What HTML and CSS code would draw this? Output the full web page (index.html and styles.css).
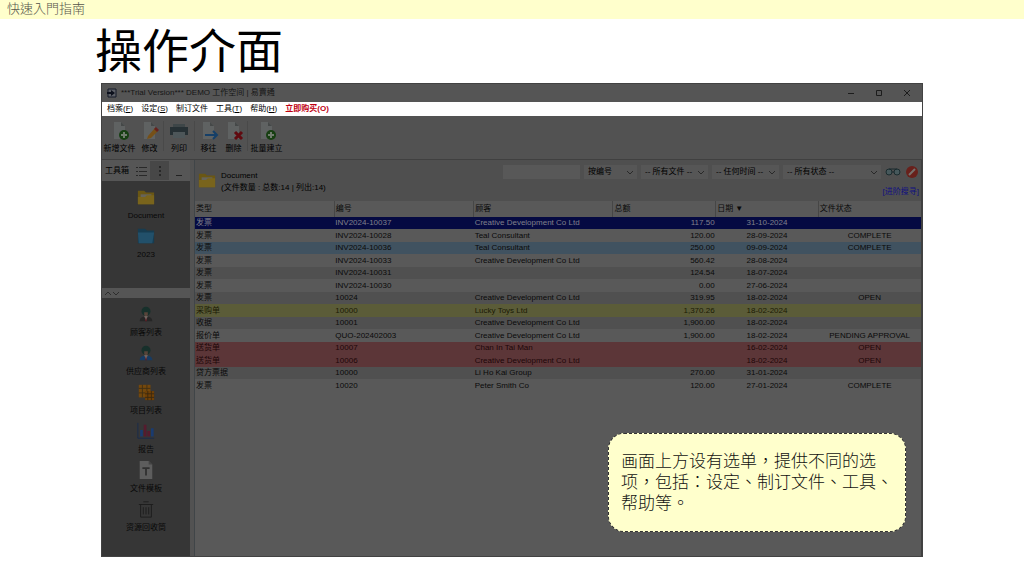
FILE: index.html
```html
<!DOCTYPE html>
<html lang="zh-Hant">
<head>
<meta charset="utf-8">
<title>操作介面</title>
<link rel="stylesheet" href="styles.css">
</head>
<body>
<svg width="0" height="0" class="defs" aria-hidden="true">
  <symbol id="page" viewBox="0 0 20 20"><path d="M4 1h7l4 4v13H4z" fill="#5f6262"/><path d="M11 1v4h4z" fill="#454848"/></symbol>
  <symbol id="folder" viewBox="0 0 20 20"><path d="M1 3h7l2 2h9v13H1z" fill="#6a5714"/><path d="M4 7h12v5H4z" fill="#66645a"/><path d="M1 10h8l2-2h8v10H1z" fill="#79641c"/></symbol>
  <symbol id="person" viewBox="0 0 20 20"><path d="M3 18c0-4 3-5 5-5h4c2 0 5 1 5 5z" fill="currentColor"/><path d="M8 12h4l-2 6z" fill="#77706a"/><path d="M10 13l1 5H9z" fill="#5d1820"/><circle cx="10" cy="7" r="5" fill="#17302b"/><path d="M8 8h4v3l-2 2-2-2z" fill="#57443a"/></symbol>
  <symbol id="chev" viewBox="0 0 8 6"><path d="M1 1l3 3 3-3" fill="none" stroke="#292929"/></symbol>
</svg>
<header class="guide">快速入門指南</header>
<main class="slide">
  <h1>操作介面</h1>
  <section class="window">
    <div class="titlebar">
      <svg width="10" height="10" viewBox="0 0 10 10"><path d="M1 1h8v8H1z" fill="#5c5f66" stroke="#151b28"/><path d="M0 4h4V2l4 3-4 3V6H0z" fill="#0c101c"/></svg>
      <span class="apptitle">***Trial Version*** DEMO 工作空间 | 易賣通</span>
      <button aria-label="最小化"><svg width="8" height="8"><path d="M1 4.500h6" stroke="#1c1c1c"/></svg></button>
      <button aria-label="最大化"><svg width="8" height="8"><path d="M1.500 1.500h5v5h-5z" fill="none" stroke="#1c1c1c"/></svg></button>
      <button aria-label="关闭"><svg width="8" height="8"><path d="M1 1l6 6M7 1l-6 6" stroke="#1c1c1c"/></svg></button>
    </div>
    <nav class="menu">
      <button>档案(<u>F</u>)</button><button>设定(<u>S</u>)</button><button>制订文件</button><button>工具(<u>T</u>)</button><button>帮助(<u>H</u>)</button><button class="buy">立即购买(O)</button>
    </nav>
    <div class="toolbar">
      <button class="wide"><svg viewBox="0 0 20 20"><use href="#page"/><circle cx="14" cy="14" r="5" fill="#173f12"/><path d="M14 11v6M11 14h6" stroke="#707b6d" stroke-width="2"/></svg>新增文件</button>
      <button><svg viewBox="0 0 20 20"><use href="#page"/><path d="M8 15l7-8 3 3-7 7-4 1z" fill="#765017"/><path d="M14 8l2-2 3 3-2 2z" fill="#66211f"/></svg>修改</button>
      <i></i>
      <button class="mid"><svg viewBox="0 0 20 20"><path d="M4 3h12v5H4z" fill="#3e4648"/><path d="M1 6h18v8H1z" fill="#263034"/><path d="M4 11h12v6H4z" fill="#4d5659"/></svg>列印</button>
      <i></i>
      <button><svg viewBox="0 0 20 20"><use href="#page"/><path d="M6 14h12M14 10l4 4-4 4" fill="none" stroke="#153f68" stroke-width="2"/></svg>移往</button>
      <button><svg viewBox="0 0 20 20"><use href="#page"/><path d="M11 11l7 7M18 11l-7 7" stroke="#600a10" stroke-width="3"/></svg>删除</button>
      <i></i>
      <button class="wide"><svg viewBox="0 0 20 20"><use href="#page"/><circle cx="14" cy="14" r="5" fill="#173f12"/><path d="M14 11v6M11 14h6" stroke="#707b6d" stroke-width="2"/></svg>批量建立</button>
    </div>
    <div class="work">
      <aside class="side">
        <div class="sidehead"><span>工具箱</span>
          <button aria-label="列表"><svg width="12" height="12"><path d="M1 2.500h2M1 6.500h2M1 10.500h2M4 2.500h8M4 6.500h8M4 10.500h8" stroke="#292929"/></svg></button>
          <button class="on" aria-label="图标"><svg width="12" height="12"><path d="M6 1v2M6 5v2M6 9v2" stroke="#282828" stroke-width="2"/></svg></button>
          <button aria-label="收起"><svg width="12" height="12"><path d="M3 10.500h6" stroke="#222"/></svg></button>
        </div>
        <div class="panel top">
          <button><svg viewBox="0 0 20 20"><use href="#folder"/></svg>Document</button>
          <button><svg viewBox="0 0 20 20"><path d="M1 2h8l2 2h8v14H1z" fill="#173c50"/><path d="M1 6h18l-2 12H2z" fill="#22506a"/></svg>2023</button>
        </div>
        <div class="split"><svg width="16" height="6"><path d="M1 5l3-3 3 3M9 2l3 3 3-3" fill="none" stroke="#2d2d2d"/></svg></div>
        <div class="panel">
          <button><svg class="gray" viewBox="0 0 20 20"><use href="#person"/></svg>顾客列表</button>
          <button><svg class="blue" viewBox="0 0 20 20"><use href="#person"/></svg>供应商列表</button>
          <button><svg viewBox="0 0 20 20"><path d="M2 2h13v14H2z" fill="#74480c"/><path d="M2 6h13M2 11h13M6 2v14M11 2v14" stroke="#403015"/><path d="M9 9h10v10H9z" fill="#704006"/><path d="M9 12h10M9 16h10M12 9v10M16 9v10" stroke="#3a2810"/></svg>项目列表</button>
          <button><svg viewBox="0 0 20 20"><path d="M1 1v17h18" fill="none" stroke="#172b4e"/><path d="M5 9v7M17 7v9" stroke="#193b70" stroke-width="3"/><path d="M9 3v13M13 10v6" stroke="#561b2e" stroke-width="3"/></svg>报告</button>
          <button><svg viewBox="0 0 20 20"><path d="M3 0h10l4 4v16H3z" fill="#5d5d5d"/><path d="M13 0v4h4z" fill="#444"/><path d="M6 8h8M10 8v8" stroke="#303030" stroke-width="2"/></svg>文件模板</button>
          <button><svg viewBox="0 0 20 20"><path d="M2 5h16M7 2h6M4 5v14h12V5M7 8v8M10 8v8M13 8v8" fill="none" stroke="#1c1c1c"/></svg>资源回收筒</button>
        </div>
      </aside>
      <div class="content">
        <div class="filter">
          <svg class="fold" viewBox="0 0 20 20"><use href="#folder"/></svg>
          <div class="count">Document<br>(文件数量 : 总数:14 | 列出:14)</div>
          <div class="search">
            <div class="controls">
              <input aria-label="搜寻" type="text">
              <label class="s1"><select aria-label="搜寻范围"><option>按编号</option></select><svg><use href="#chev"/></svg></label>
              <label class="s2"><select aria-label="文件"><option>-- 所有文件 --</option></select><svg><use href="#chev"/></svg></label>
              <label class="s2"><select aria-label="时间"><option>-- 任何时间 --</option></select><svg><use href="#chev"/></svg></label>
              <label class="s3"><select aria-label="状态"><option>-- 所有状态 --</option></select><svg><use href="#chev"/></svg></label>
              <button aria-label="搜寻"><svg width="16" height="14" viewBox="0 0 16 14"><g fill="#46585b" stroke="#1b2b2e"><circle cx="4" cy="7" r="3"/><circle cx="12" cy="7" r="3"/><path d="M4 4h8M7 7h2"/></g></svg></button>
              <button aria-label="清除"><svg width="14" height="14" viewBox="0 0 14 14"><circle cx="7" cy="7" r="6" fill="#68201b"/><path d="M4 10l6-6" stroke="#77706c" stroke-width="2"/></svg></button>
            </div>
            <a href="#adv">[进阶搜寻]</a>
          </div>
        </div>
        <table>
          <thead><tr><th>类型</th><th>编号</th><th>顾客</th><th class="n">总额</th><th class="n">日期 ▼</th><th class="n">文件状态</th></tr></thead>
          <tbody>
            <tr class="sel"><td>发票<td>INV2024-10037<td>Creative Development Co Ltd<td>117.50<td>31-10-2024<td></tr>
            <tr><td>发票<td>INV2024-10028<td>Teal Consultant<td>120.00<td>28-09-2024<td>COMPLETE</tr>
            <tr class="sky"><td>发票<td>INV2024-10036<td>Teal Consultant<td>250.00<td>09-09-2024<td>COMPLETE</tr>
            <tr><td>发票<td>INV2024-10033<td>Creative Development Co Ltd<td>560.42<td>28-08-2024<td></tr>
            <tr><td>发票<td>INV2024-10031<td><td>124.54<td>18-07-2024<td></tr>
            <tr><td>发票<td>INV2024-10030<td><td>0.00<td>27-06-2024<td></tr>
            <tr><td>发票<td>10024<td>Creative Development Co Ltd<td>319.95<td>18-02-2024<td>OPEN</tr>
            <tr class="yel"><td>采购单<td>10000<td>Lucky Toys Ltd<td>1,370.26<td>18-02-2024<td></tr>
            <tr><td>收据<td>10001<td>Creative Development Co Ltd<td>1,900.00<td>18-02-2024<td></tr>
            <tr><td>报价单<td>QUO-202402003<td>Creative Development Co Ltd<td>1,900.00<td>18-02-2024<td>PENDING APPROVAL</tr>
            <tr class="red"><td>送货单<td>10007<td>Chan In Tai Man<td><td>16-02-2024<td>OPEN</tr>
            <tr class="red"><td>送货单<td>10006<td>Creative Development Co Ltd<td><td>18-02-2024<td>OPEN</tr>
            <tr><td>贷方票据<td>10000<td>Li Ho Kai Group<td>270.00<td>31-01-2024<td></tr>
            <tr><td>发票<td>10020<td>Peter Smith Co<td>120.00<td>27-01-2024<td>COMPLETE</tr>
          </tbody>
        </table>
      </div>
    </div>
    <p class="callout">画面上方设有选单，提供不同的选<br>项，包括：设定、制订文件、工具、<br>帮助等。</p>
  </section>
</main>
</body>
</html>
```
FILE: styles.css
```css
* { box-sizing: border-box; }
body {
  margin: 0;
  min-height: 100vh;
  display: flex;
  flex-direction: column;
  background: #fff;
  color: #000;
  font-family: "Liberation Sans", "Noto Sans CJK TC", sans-serif;
}
.defs { position: absolute; }
button, input, select { margin: 0; padding: 0; border: 0; background: none; color: inherit; font: inherit; }
svg { display: block; }

.guide {
  height: 19px;
  padding-left: 7px;
  background: #ffffcc;
  color: #55554a;
  font-size: 13px;
  line-height: 17px;
  font-weight: 300;
}
.slide { flex: 1; display: flex; flex-direction: column; padding: 0 101px 19px; }
h1 {
  margin: 0 0 0 -6px;
  height: 64px;
  font-size: 47px;
  line-height: 66px;
  font-weight: 400;
}
.window {
  position: relative;
  flex: 1;
  display: flex;
  flex-direction: column;
  border: 1px solid #424242;
  background: #525252;
  font-size: 8px;
  line-height: 12px;
}
.titlebar { height: 18px; display: flex; align-items: center; padding: 0 1px 0 5px; background: #555; color: #151515; }
.apptitle { flex: 1; margin-left: 4px; white-space: nowrap; }
.titlebar button { width: 28px; display: flex; justify-content: center; }

.menu { height: 14px; display: flex; align-items: center; gap: 8px; padding-left: 5px; background: #fff; white-space: nowrap; }
.menu .buy { color: #c00010; font-weight: 700; }

.toolbar { height: 44px; display: flex; align-items: flex-start; padding: 5px 0 0; border-bottom: 1px solid #404040; }
.toolbar button { width: 25px; display: flex; flex-direction: column; align-items: center; white-space: nowrap; }
.toolbar .wide { width: 35px; }
.toolbar .mid { width: 28px; }
.toolbar svg { width: 20px; height: 20px; margin-bottom: 2px; }
.toolbar i { width: 1px; height: 30px; margin: 0 1px; background: #494949; }

.work { flex: 1; display: flex; }
.side { width: 88px; flex: none; display: flex; flex-direction: column; }
.sidehead { height: 21px; display: flex; align-items: center; padding-left: 3px; background: #565656; }
.sidehead span { width: 26px; }
.sidehead button { width: 19px; height: 19px; display: grid; place-items: center; }
.sidehead .on { background: #474747; }
.panel { flex: 1; padding-top: 7px; background: #363636; color: #080808; }
.panel.top { flex: none; height: 107px; }
.panel button { width: 100%; height: 39px; display: flex; flex-direction: column; align-items: center; }
.panel svg { width: 18px; height: 18px; margin-bottom: 4px; }
.panel .gray { color: #262626; }
.panel .blue { color: #173b62; }
.split { height: 10px; padding: 2px; background: #555; }

.content { flex: 1; min-width: 0; margin-left: 4px; border-left: 1px solid #404548; border-right: 1px solid #404040; background: #595959; }
.filter { height: 41px; display: flex; padding: 5px 2px 0 3px; background: #4f4f4f; }
.fold { width: 18px; height: 18px; margin-top: 6px; }
.count { margin: 5px 0 0 5px; white-space: nowrap; }
.search { margin-left: auto; }
.controls { display: flex; gap: 4px; }
.controls input { width: 77px; height: 14px; background: #585858; }
.controls label { position: relative; height: 14px; background: #565656; }
.controls select { appearance: none; width: 100%; height: 14px; padding: 0 4px; line-height: 14px; display: block; }
.controls label svg { position: absolute; right: 3px; top: 5px; width: 8px; height: 6px; pointer-events: none; }
.s1 { width: 53px; }
.s2 { width: 67px; }
.s3 { width: 98px; }
.controls button { display: grid; place-items: center; }
.search a { display: block; margin-top: 7px; color: #101080; text-align: right; text-decoration: none; }

table { width: 100%; border-collapse: collapse; table-layout: fixed; }
th, td { padding: 0 1px; text-align: left; font-weight: 400; white-space: nowrap; color: #0a0a0a; overflow: hidden; }
th { width: 19%; height: 16px; border-left: 1px solid #464646; }
th:first-child { border-left: 0; }
th.n { width: 14%; }
td { height: 12px; line-height: 12px; }
tbody tr:nth-child(even) td { height: 13px; }
tbody tr:nth-child(odd) { background: #505050; }
td:nth-child(4) { text-align: right; }
td:nth-child(5), td:nth-child(6) { text-align: center; }
tbody tr.sel { background: #050a42; }
tbody tr.sel td { color: #80808c; }
tbody tr.sky { background: #405260; }
tbody tr.yel { background: #5b5c38; }
tbody tr.red { background: #5c3638; }
tbody tr.yel td { color: #1a1a04; }
tbody tr.red td { color: #1c0608; }

.callout {
  position: absolute;
  right: 16px;
  bottom: 24px;
  margin: 0;
  padding: 17px 12px;
  width: 298px;
  border: 1px dashed #333;
  border-radius: 16px;
  background: #ffffcc;
  color: #111;
  font-size: 17px;
  line-height: 21px;
  font-weight: 300;
  white-space: nowrap;
}
```
